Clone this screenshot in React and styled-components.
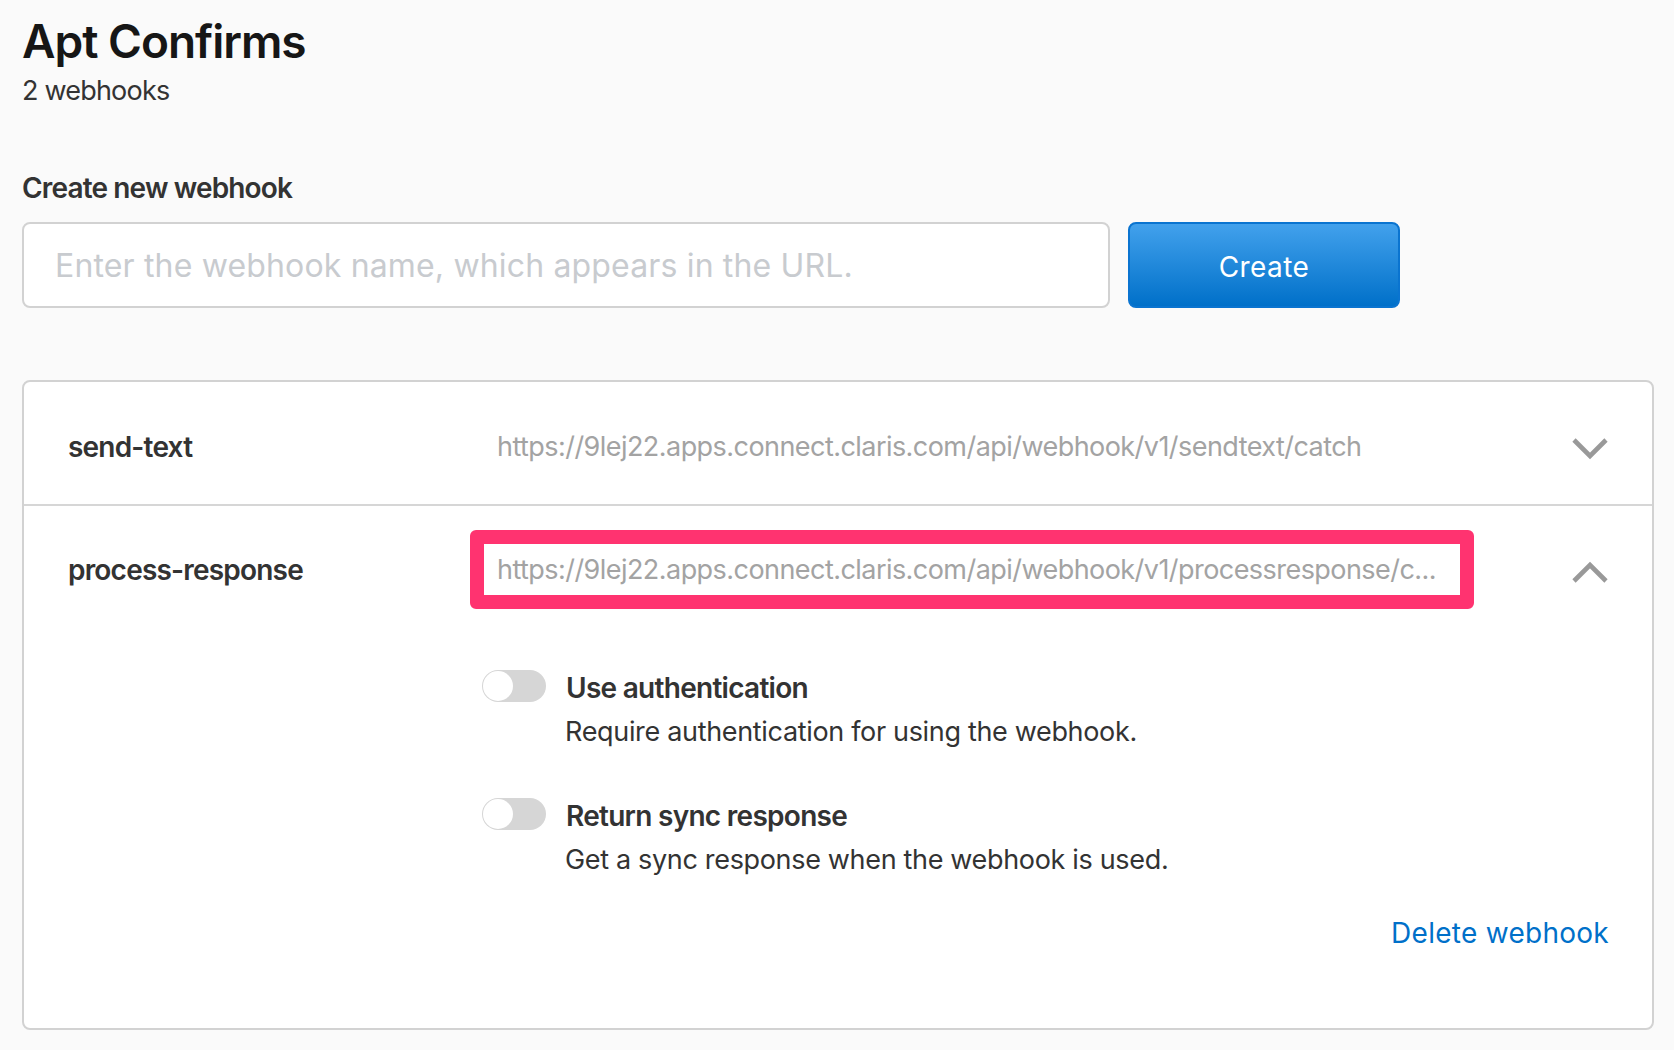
import React from "react";
import styled, { createGlobalStyle } from "styled-components";

const Global = createGlobalStyle`
  html, body { margin: 0; padding: 0; background: #fafafa; }
  * { box-sizing: border-box; }
  body { font-family: Inter, "Liberation Sans", sans-serif; color: #333; }
  input::placeholder { color: #c8cbcf; opacity: 1; }
`;

const Page = styled.main`
  width: 1674px;
  height: 1050px;
  padding: 11px 20px 20px 22px;
  overflow: hidden;
`;
const Title = styled.h1`
  margin: 0;
  font-size: 46px;
  line-height: 60px;
  font-weight: 600;
  letter-spacing: -1px;
  color: #161616;
`;
const Subtitle = styled.p`
  margin: 2px 0 0;
  font-size: 27px;
  line-height: 36px;
  font-weight: 400;
  letter-spacing: -0.8px;
  color: #333;
`;
const SectionLabel = styled.h2`
  margin: 61px 0 16px;
  font-size: 28px;
  line-height: 36px;
  font-weight: 600;
  letter-spacing: -0.85px;
  color: #333;
`;
const CreateRow = styled.form`
  display: flex;
  gap: 18px;
  margin: 0 0 72px;
`;
const NameInput = styled.input`
  width: 1088px;
  height: 86px;
  border: 2px solid #d2d2d2;
  border-radius: 8px;
  background: #fff;
  padding: 0 31px;
  font: 400 32px Inter, "Liberation Sans", sans-serif;
  letter-spacing: 0.16px;
  outline: none;
`;
const CreateButton = styled.button`
  width: 272px;
  height: 86px;
  border: 2px solid #0a74d0;
  border-radius: 8px;
  padding: 4px 0 0;
  background: linear-gradient(#42a1ec, #0070c9);
  color: #fff;
  font: 400 28px Inter, "Liberation Sans", sans-serif;
  letter-spacing: 0.4px;
`;
const Panel = styled.section`
  width: 1632px;
  height: 650px;
  background: #fff;
  border: 2px solid #d2d2d2;
  border-radius: 8px;
`;
const Row = styled.div`
  display: grid;
  grid-template-columns: 446px 1004px 1fr;
  align-items: center;
  padding: ${(p) => p.$pad};
  border-bottom: ${(p) => (p.$divider ? "2px solid #d6d6d6" : "none")};
`;
const HookName = styled.div`
  padding-left: 44px;
  font-size: 28px;
  font-weight: 600;
  letter-spacing: -0.8px;
  color: #333;
`;
const Url = styled.div`
  height: 79px;
  border: 14px solid ${(p) => (p.$highlight ? "#ff3370" : "transparent")};
  border-radius: 6px;
  padding: 0 13px;
  display: flex;
  align-items: center;
  font-size: 27px;
  letter-spacing: -0.55px;
  color: #a3a3a3;
  white-space: nowrap;
`;
const Chevron = styled.svg`
  justify-self: end;
  margin-right: 44px;
  width: 36px;
  height: 28px;
`;
const Options = styled.div`
  padding: 61px 0 0 458px;
  display: flex;
  flex-direction: column;
  gap: 48px;
`;
const Option = styled.div`
  display: flex;
  gap: 20px;
  align-items: flex-start;
`;
const Toggle = styled.span`
  flex: none;
  width: 64px;
  height: 32px;
  border-radius: 16px;
  background: #d6d6d6;
  position: relative;
  &::before {
    content: "";
    position: absolute;
    left: 1px;
    top: 1px;
    width: 30px;
    height: 30px;
    border-radius: 50%;
    background: #fff;
  }
`;
const OptionText = styled.div`
  display: flex;
  flex-direction: column;
`;
const OptionTitle = styled.div`
  font-size: 28px;
  line-height: 36px;
  font-weight: 600;
  letter-spacing: -0.72px;
  color: #333;
`;
const OptionDesc = styled.div`
  margin: 8px 0 0 -1px;
  font-size: 27px;
  line-height: 36px;
  font-weight: 400;
  letter-spacing: -0.33px;
  color: #333;
`;
const DeleteRow = styled.div`
  padding: 38px 43px 0 0;
  text-align: right;
`;
const DeleteLink = styled.a`
  font-size: 28px;
  letter-spacing: 0.27px;
  color: #0070c9;
`;

const ChevronIcon = ({ up }) => (
  <Chevron viewBox="0 0 36 28" fill="none" stroke="#999" strokeWidth="4.6">
    <path d={up ? "M2 25 18 9 34 25" : "M2 7 18 23 34 7"} />
  </Chevron>
);

export default function App() {
  return (
    <Page>
      <Global />
      <Title>Apt Confirms</Title>
      <Subtitle>2 webhooks</Subtitle>
      <SectionLabel>Create new webhook</SectionLabel>
      <CreateRow>
        <NameInput placeholder="Enter the webhook name, which appears in the URL." />
        <CreateButton type="button">Create</CreateButton>
      </CreateRow>
      <Panel>
        <Row $divider $pad="25px 0 18px">
          <HookName>send-text</HookName>
          <Url>https://9lej22.apps.connect.claris.com/api/webhook/v1/sendtext/catch</Url>
          <ChevronIcon />
        </Row>
        <Row $pad="24px 0 0">
          <HookName>process-response</HookName>
          <Url $highlight>https://9lej22.apps.connect.claris.com/api/webhook/v1/processresponse/c...</Url>
          <ChevronIcon up />
        </Row>
        <Options>
          <Option>
            <Toggle />
            <OptionText>
              <OptionTitle>Use authentication</OptionTitle>
              <OptionDesc>Require authentication for using the webhook.</OptionDesc>
            </OptionText>
          </Option>
          <Option>
            <Toggle />
            <OptionText>
              <OptionTitle>Return sync response</OptionTitle>
              <OptionDesc>Get a sync response when the webhook is used.</OptionDesc>
            </OptionText>
          </Option>
        </Options>
        <DeleteRow>
          <DeleteLink>Delete webhook</DeleteLink>
        </DeleteRow>
      </Panel>
    </Page>
  );
}
